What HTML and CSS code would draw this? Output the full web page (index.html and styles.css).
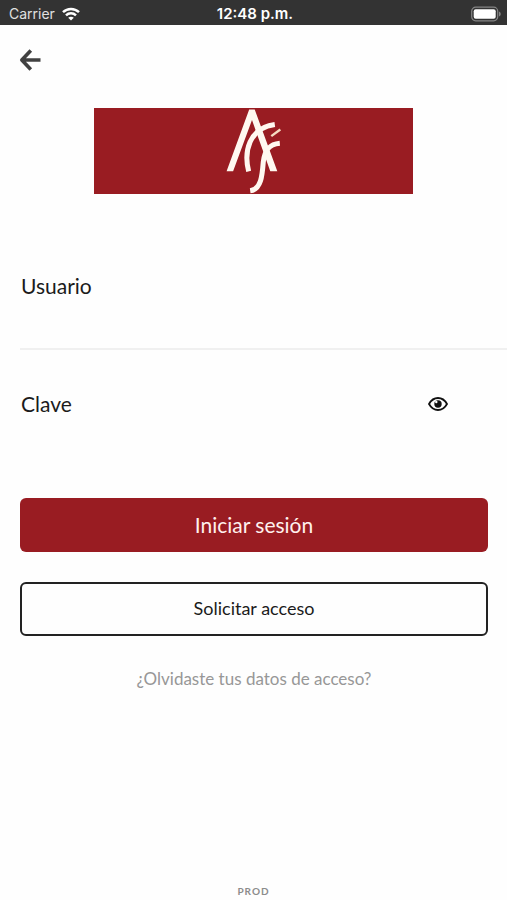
FILE: index.html
```html
<!DOCTYPE html>
<html lang="es">
<head>
<meta charset="utf-8">
<meta name="viewport" content="width=device-width, initial-scale=1">
<title>Iniciar sesión</title>
<link rel="stylesheet" href="styles.css">
</head>
<body>
<div class="status">
  <div class="carrier">
    <span>Carrier</span>
    <svg width="18" height="14" viewBox="0 0 18 14" fill="none" stroke="#fff" stroke-width="2.5" aria-hidden="true">
      <path d="M1 5.200C5.500.8 12.500.8 17 5.200M4 8.300c2.800-2.700 7.200-2.700 10 0"/>
      <path d="M9 13.500 6.200 10.700c1.600-1.400 4-1.400 5.600 0z" fill="#fff" stroke="none"/>
    </svg>
  </div>
  <time class="clock">12:48 p.m.</time>
  <svg class="battery" width="30" height="16" viewBox="0 0 30 16" aria-hidden="true">
    <rect x=".7" y="1.200" width="26" height="13.600" rx="4" fill="#333" stroke="#858585" stroke-width="1.200"/>
    <rect x="2.700" y="3.200" width="22" height="9.600" rx="2" fill="#fff"/>
    <path d="M28 5.500c2.300 1 2.300 4 0 5z" fill="#858585"/>
  </svg>
</div>
<main class="screen">
  <button class="back" type="button" aria-label="Volver">
    <svg width="22" height="22" viewBox="0 0 22 22" fill="none" stroke="#414141" stroke-width="3.600" aria-hidden="true">
      <path d="M11.800 1.500 2.800 11l9 9.500M3 11h18.500" stroke-linejoin="round"/>
    </svg>
  </button>
  <svg class="logo" viewBox="0 0 318 86" role="img" aria-label="Logotipo">
    <rect width="318" height="86" fill="#991c22"/>
    <path d="M132 63 154.500 1.500h5.500L182.500 63h-7L157.300 12 138.500 63z" fill="#fff8f0"/>
    <g fill="none" stroke="#fff8f0" stroke-width="5">
      <path d="M154 63C149 44 154 20 180 16.500"/>
      <path d="M185 35C173 36 169.500 44 168.500 54c-1 13-2 27-13 28.500"/>
      <path d="m176.500 28 9-6.500" stroke="#f6dcc2" stroke-width="2.400"/>
    </g>
  </svg>
  <form class="form">
    <div class="field field-user">
      <label for="user">Usuario</label>
      <input id="user" type="text" autocomplete="username">
    </div>
    <div class="field">
      <div class="label-row">
        <label for="pass">Clave</label>
        <button class="reveal" type="button" aria-label="Mostrar clave">
          <svg width="20" height="14" viewBox="0 0 20 14" aria-hidden="true">
            <path d="M1 7c4.500-8 13.500-8 18 0-4.500 8-13.500 8-18 0z" fill="none" stroke="#111" stroke-width="1.800"/>
            <circle cx="10" cy="7" r="3.700" fill="#111"/>
            <circle cx="8.300" cy="5" r="1.200" fill="#fff"/>
          </svg>
        </button>
      </div>
      <input id="pass" type="password" autocomplete="current-password">
    </div>
    <div class="actions">
      <button class="btn primary" type="submit">Iniciar sesión</button>
      <button class="btn outline" type="button">Solicitar acceso</button>
      <a class="forgot" href="#">¿Olvidaste tus datos de acceso?</a>
    </div>
  </form>
  <footer class="env">PROD</footer>
</main>
</body>
</html>
```
FILE: styles.css
```css
* {
  box-sizing: border-box;
}

body {
  display: flex;
  flex-direction: column;
  min-height: 100vh;
  margin: 0;
  background: #fefefe;
  color: #1b1b1b;
  font-family: Lato, sans-serif;
}

button,
input {
  padding: 0;
  border: 0;
  background: none;
  color: inherit;
  font: inherit;
}

svg {
  display: block;
}

.status {
  display: grid;
  grid-template-columns: 1fr auto 1fr;
  align-items: center;
  height: 25px;
  padding: 2px 6px 0 9px;
  background: #333;
  color: #fff;
  font-family: Inter, sans-serif;
  font-size: 14px;
}

.carrier {
  display: flex;
  align-items: center;
  gap: 7px;
  color: #e0e0e0;
}

.clock {
  font-size: 15px;
  font-weight: 600;
}

.battery {
  justify-self: end;
}

.screen {
  display: flex;
  flex: 1;
  flex-direction: column;
}

.back {
  align-self: flex-start;
  margin: 24px 0 0 19px;
}

.logo {
  width: 63%;
  margin: 37px auto 0;
}

.form {
  padding-left: 20px;
}

.field {
  font-size: 21px;
  line-height: 28px;
}

.field label {
  display: block;
  padding-left: 1px;
}

.field input {
  display: block;
  width: 100%;
  height: 48px;
  outline: 0;
}

.field-user {
  margin: 78px 0 40px;
  border-bottom: 2px solid #f0f0f0;
}

.label-row {
  display: flex;
  align-items: center;
  justify-content: space-between;
  padding-right: 59px;
}

.actions {
  display: flex;
  flex-direction: column;
  margin-top: 32px;
  padding-right: 19px;
}

.btn {
  height: 54px;
  padding-bottom: 2px;
  border-radius: 6px;
}

.primary {
  background: #991c22;
  color: #fff0ed;
  font-size: 21px;
}

.outline {
  margin-top: 30px;
  border: 2px solid #222;
  font-size: 18px;
}

.forgot {
  align-self: center;
  margin-top: 32px;
  color: #979797;
  font-size: 17px;
  line-height: 22px;
  text-decoration: none;
}

.env {
  margin-top: auto;
  padding-bottom: 2px;
  color: #8c8c8c;
  font-size: 10px;
  font-weight: 700;
  letter-spacing: 1px;
  line-height: 14px;
  text-align: center;
}
```
